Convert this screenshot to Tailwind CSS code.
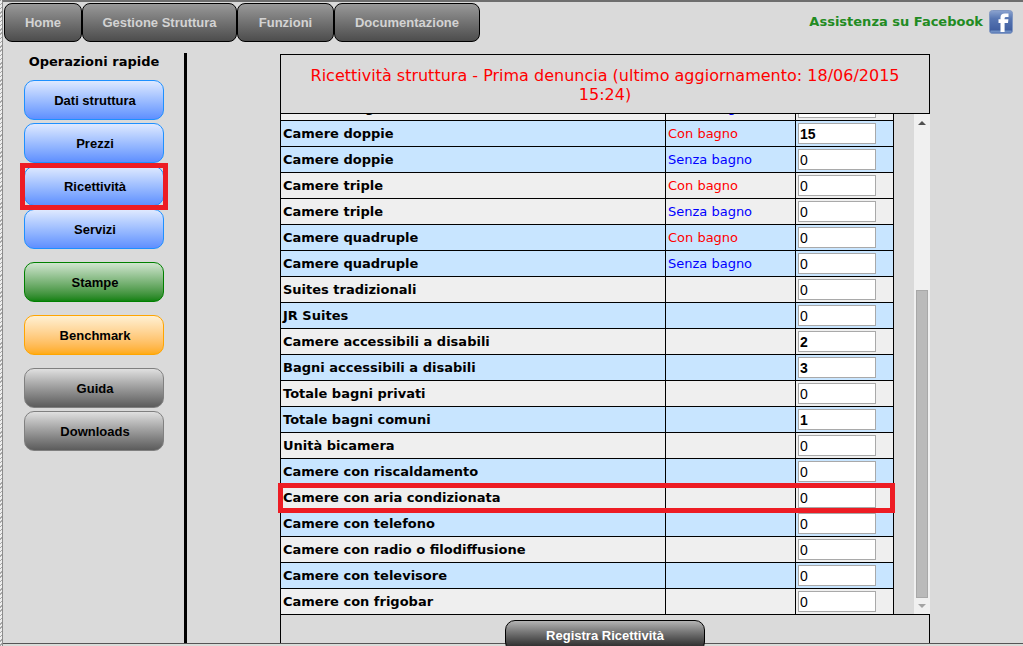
<!DOCTYPE html>
<html lang="it">
<head>
<meta charset="utf-8">
<title>Ricettività struttura</title>
<script src="https://cdn.jsdelivr.net/npm/@tailwindcss/browser@4"></script>
</head>
<body class="flex h-screen overflow-hidden bg-[#dadada] font-['DejaVu_Sans',sans-serif] text-[13px] text-black">
<div class="w-[2px] shrink-0 bg-[repeating-linear-gradient(135deg,#a8a8a8_0px,#a8a8a8_1px,#eeeeee_1px,#eeeeee_3px)]"></div>
<div class="flex min-w-0 flex-1 flex-col border-t-2 border-l border-t-[#6e6e6e] border-l-[#8c8c8c]">
  <header class="flex h-[51px] shrink-0 justify-between pt-px pr-[10px] pl-px">
    <nav class="flex h-[39px] font-['Liberation_Sans',sans-serif] font-bold text-[#d3d3d3]">
      <a href="#" class="flex w-[78px] items-center justify-center rounded-lg border border-black bg-linear-to-b from-[#999999] to-[#4d4d4d]">Home</a>
      <a href="#" class="flex w-[155px] items-center justify-center rounded-lg border border-black bg-linear-to-b from-[#999999] to-[#4d4d4d]">Gestione Struttura</a>
      <a href="#" class="flex w-[97px] items-center justify-center rounded-lg border border-black bg-linear-to-b from-[#999999] to-[#4d4d4d]">Funzioni</a>
      <a href="#" class="flex w-[146px] items-center justify-center rounded-lg border border-black bg-linear-to-b from-[#999999] to-[#4d4d4d]">Documentazione</a>
    </nav>
    <a href="#" class="flex h-[38px] items-center gap-[6px] font-bold text-[#228b22]">Assistenza su Facebook
      <svg width="24" height="24" viewBox="0 0 24 24" aria-hidden="true">
        <defs><linearGradient id="fb" x1="0" y1="0" x2="0" y2="1"><stop offset="0" stop-color="#8ba3cf"/><stop offset=".35" stop-color="#5877b3"/><stop offset="1" stop-color="#3a589b"/></linearGradient></defs>
        <rect x=".5" y=".5" width="23" height="23" rx="3" fill="url(#fb)" stroke="#8298c2"/>
        <path d="M1.5 20.5h21v1.2q0 1-1 1h-19q-1 0-1-1z" fill="#6f8fc4"/>
        <path d="M11.5 22v-9H9.5V9.3h2V7.6C11.5 4.8 13 3.4 15.800 3.400H19.500V7H17.300C16 7 15.600 7.500 15.600 8.500v.8h3.800L19 13h-3.400v9z" fill="#fff"/>
      </svg>
    </a>
  </header>

  <div class="flex min-h-0 flex-1">
    <aside class="flex w-[184px] shrink-0 flex-col items-center border-r-3 border-black pl-px">
      <h2 class="h-[27px] font-bold leading-[18px]">Operazioni rapide</h2>
      <div class="flex flex-col gap-[13px] font-['Liberation_Sans',sans-serif]">
        <div class="flex flex-col gap-[3px]">
          <button class="h-10 w-[140px] rounded-[10px] border border-[#1e90ff] bg-linear-to-b from-[#dfe9ff] to-[#5f8fff] pt-0.5 pl-0.5 font-bold">Dati struttura</button>
          <button class="h-10 w-[140px] rounded-[10px] border border-[#1e90ff] bg-linear-to-b from-[#dfe9ff] to-[#5f8fff] pt-0.5 pl-0.5 font-bold">Prezzi</button>
          <div class="relative z-10 h-10">
            <button class="h-10 w-[140px] rounded-[10px] border border-[#1e90ff] bg-linear-to-b from-[#dfe9ff] to-[#5f8fff] pt-0.5 pl-0.5 font-bold">Ricettività</button>
            <span class="pointer-events-none absolute -inset-x-1 -top-[3px] -bottom-1 border-5 border-[#ed1c24]"></span>
          </div>
          <button class="h-10 w-[140px] rounded-[10px] border border-[#1e90ff] bg-linear-to-b from-[#dfe9ff] to-[#5f8fff] pt-0.5 pl-0.5 font-bold">Servizi</button>
        </div>
        <button class="h-10 w-[140px] rounded-[10px] border border-[#008000] bg-linear-to-b from-[#d0e5d0] to-[#0f820f] pt-0.5 pl-0.5 font-bold">Stampe</button>
        <button class="h-10 w-[140px] rounded-[10px] border border-[#ffa500] bg-linear-to-b from-[#fff0d2] to-[#ffab0f] pt-0.5 pl-0.5 font-bold">Benchmark</button>
        <div class="flex flex-col gap-[3px]">
          <button class="h-10 w-[140px] rounded-[10px] border border-[#808080] bg-linear-to-b from-[#e0e0e0] to-[#5c5c5c] pt-0.5 pl-0.5 font-bold">Guida</button>
          <button class="h-10 w-[140px] rounded-[10px] border border-[#808080] bg-linear-to-b from-[#e0e0e0] to-[#5c5c5c] pt-0.5 pl-0.5 font-bold">Downloads</button>
        </div>
      </div>
    </aside>

    <main class="flex min-w-0 flex-1 justify-center pt-px">
      <form class="flex w-full max-w-[650px] flex-col">
        <h1 class="h-[60px] shrink-0 border border-black px-5 pt-[11px] text-center text-base leading-[19px] text-[#ff0000]">Ricettività struttura - Prima denuncia (ultimo aggiornamento: 18/06/2015 15:24)</h1>
        <div class="flex h-[500px] shrink-0 gap-5 border-l border-black">
          <div class="flex min-w-0 flex-1 flex-col justify-end overflow-x-visible overflow-y-clip">
            <table class="w-full table-fixed border-separate border-spacing-0">
              <colgroup><col><col class="w-[130px]"><col class="w-[98px]"></colgroup>
              <tbody id="rows"></tbody>
            </table>
          </div>
          <div class="flex w-4 shrink-0 flex-col items-center bg-[#f0f0f0] pt-[7px] pb-[6px]" aria-hidden="true">
            <svg width="8" height="4" viewBox="0 0 8 4"><path d="M0 4 4 0 8 4z" fill="#505050"/></svg>
            <div class="mt-[165px] w-3 flex-1 border border-[#a8a8a8] bg-[#bababa]"></div>
            <svg class="mt-[6px]" width="8" height="4" viewBox="0 0 8 4"><path d="M0 0 4 4 8 0z" fill="#a3a3a3"/></svg>
          </div>
        </div>
        <div class="flex min-h-0 flex-1 justify-center border-x border-t border-black pt-[5px]">
          <button type="submit" class="relative z-10 h-8 w-[200px] rounded-[10px] border border-black bg-linear-to-b from-[#b4b4b4] to-[#1c1c1c] font-['Liberation_Sans',sans-serif] font-bold text-white">Registra Ricettività</button>
        </div>
      </form>
    </main>
  </div>
  <footer class="h-[3px] shrink-0 border-t border-[#555555] bg-[#d9dcd9]"></footer>
</div>

<script>
const B = 'bg-[#c8e5ff]', G = 'bg-[#efefef]', C = 'Con bagno', S = 'Senza bagno';
const rows = [
  ['Camere singole', S, 0, G], ['Camere doppie', C, 15, B], ['Camere doppie', S, 0, B],
  ['Camere triple', C, 0, G], ['Camere triple', S, 0, G],
  ['Camere quadruple', C, 0, B], ['Camere quadruple', S, 0, B],
  ['Suites tradizionali', '', 0, G], ['JR Suites', '', 0, B],
  ['Camere accessibili a disabili', '', 2, G], ['Bagni accessibili a disabili', '', 3, B],
  ['Totale bagni privati', '', 0, G], ['Totale bagni comuni', '', 1, B],
  ['Unità bicamera', '', 0, G], ['Camere con riscaldamento', '', 0, B],
  ['Camere con aria condizionata', '', 0, G], ['Camere con telefono', '', 0, B],
  ['Camere con radio o filodiffusione', '', 0, G], ['Camere con televisore', '', 0, B],
  ['Camere con frigobar', '', 0, G]
];
document.getElementById('rows').innerHTML = rows.map(([name, bath, n, bg], i) => {
  const mark = name === 'Camere con aria condizionata'
    ? '<span class="pointer-events-none absolute -top-px -right-px -bottom-[3px] -left-[3px] z-10 border-5 border-[#ed1c24]"></span>' : '';
  return `<tr class="relative h-[26px] ${bg}">
    <th class="border-t border-r border-black p-0 pl-0.5 text-left font-bold whitespace-nowrap"><label for="n${i}">${name}</label>${mark}</th>
    <td class="border-t border-r border-black p-0 pl-0.5 whitespace-nowrap ${bath === C ? 'text-[#ff0000]' : 'text-[#0000ff]'}">${bath}</td>
    <td class="border-t border-r border-black p-0 pl-0.5"><input id="n${i}" type="text" value="${n}" class="block h-[21px] w-[78px] border border-[#a9a9a9] bg-white px-px font-['Liberation_Sans',sans-serif] text-sm ${n ? 'font-bold' : ''}"></td>
  </tr>`;
}).join('');
</script>
</body>
</html>
